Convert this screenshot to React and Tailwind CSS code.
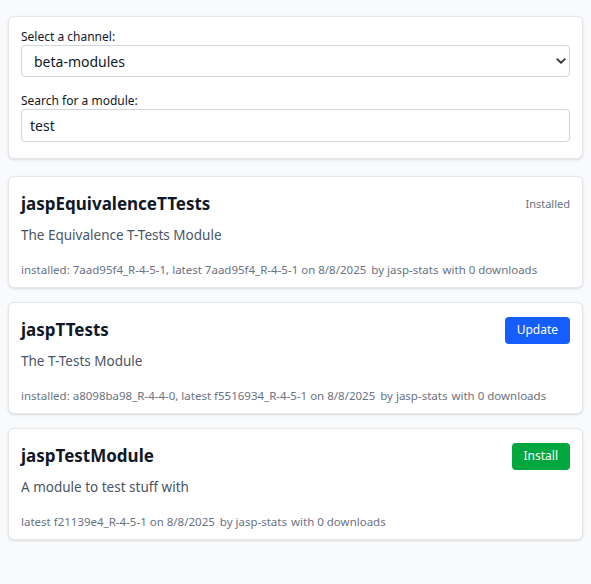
import React from "react";

function ModuleCard({ name, desc, meta, action }) {
  return (
    <div className="bg-white border border-gray-200 rounded-md shadow-sm px-3 pt-[13px] pb-[9px]">
      <div className="flex items-center justify-between h-7">
        <h2 className="text-[17px] font-bold text-gray-900 leading-7">{name}</h2>
        {action}
      </div>
      <p className="mt-[7px] text-[13.5px] leading-5 text-gray-600">{desc}</p>
      <p className="mt-[17px] text-[11.5px] leading-4 text-gray-500">{meta}</p>
    </div>
  );
}

function Meta({ prefix }) {
  return (
    <>
      {prefix} <span className="ml-[2px]">by jasp-stats</span> <span className="ml-[1px]">with 0 downloads</span>
    </>
  );
}

export default function App() {
  return (
    <div
      className="min-h-[584px] bg-gray-50 px-2 pt-4 pb-4"
      style={{ fontFamily: '"Noto Sans", sans-serif' }}
    >
      <div className="bg-white border border-gray-200 rounded-md shadow-sm px-3 pt-3 pb-4">
        <label className="block text-[12px] leading-4 text-gray-900">Select a channel:</label>
        <div className="relative">
          <select className="w-full h-8 appearance-none border border-gray-300 rounded bg-white pl-3 pr-8 text-[14px] text-gray-900">
            <option>beta-modules</option>
          </select>
          <svg className="absolute right-[4px] top-1/2 -translate-y-1/2 pointer-events-none" width="10" height="10" viewBox="0 0 16 16" fill="none">
            <path d="M2 5l6 6 6-6" stroke="#343a40" strokeWidth="3" strokeLinecap="round" strokeLinejoin="round" />
          </svg>
        </div>
        <label className="block text-[12px] leading-4 text-gray-900 mt-4">Search for a module:</label>
        <input
          className="w-full h-[33px] border border-gray-300 rounded bg-white px-2 text-[14px] text-gray-900"
          defaultValue="test"
        />
      </div>

      <div className="mt-[17px] flex flex-col gap-[14px]">
        <ModuleCard
          name="jaspEquivalenceTTests"
          desc="The Equivalence T-Tests Module"
          meta={<Meta prefix="installed: 7aad95f4_R-4-5-1, latest 7aad95f4_R-4-5-1 on 8/8/2025" />}
          action={<span className="text-[11px] text-gray-500">Installed</span>}
        />
        <ModuleCard
          name="jaspTTests"
          desc="The T-Tests Module"
          meta={<Meta prefix="installed: a8098ba98_R-4-4-0, latest f5516934_R-4-5-1 on 8/8/2025" />}
          action={
            <button className="h-[27px] px-3 rounded bg-blue-600 text-white text-[12px]">Update</button>
          }
        />
        <ModuleCard
          name="jaspTestModule"
          desc="A module to test stuff with"
          meta={<Meta prefix="latest f21139e4_R-4-5-1 on 8/8/2025" />}
          action={
            <button className="h-[27px] px-3 rounded bg-green-600 text-white text-[12px]">Install</button>
          }
        />
      </div>
    </div>
  );
}
